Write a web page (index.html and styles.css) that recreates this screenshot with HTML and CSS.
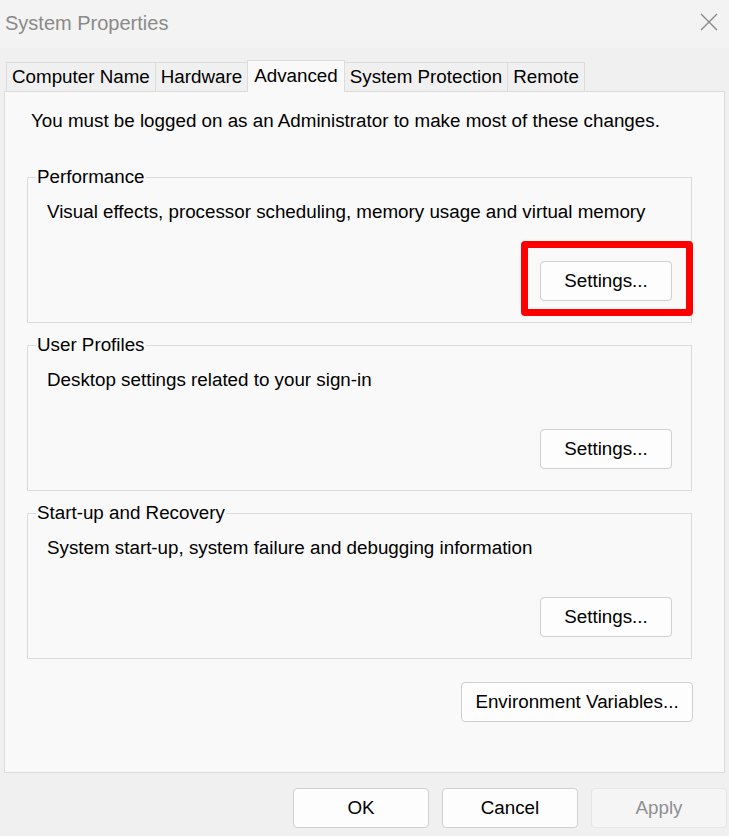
FILE: index.html
```html
<!DOCTYPE html>
<html lang="en">
<head>
  <meta charset="UTF-8" />
  <title>System Properties</title>
  <link rel="stylesheet" href="styles.css">
</head>
<body>
  <div class="window">
    <div class="titlebar">
      <span class="title">System Properties</span>
      <svg class="close" width="18" height="18" viewBox="0 0 18 18">
        <path d="M1 1 L17 17 M17 1 L1 17" stroke="#8a8a8a" stroke-width="1.4" fill="none" />
      </svg>
    </div>

    <div class="tabs">
      <div class="tab">Computer Name</div>
      <div class="tab">Hardware</div>
      <div class="tab active">Advanced</div>
      <div class="tab">System Protection</div>
      <div class="tab">Remote</div>
    </div>

    <div class="panel">
      <p class="notice">You must be logged on as an Administrator to make most of these changes.</p>

      <fieldset class="group">
        <legend>Performance</legend>
        <p>Visual effects, processor scheduling, memory usage and virtual memory</p>
        <div class="group-actions">
          <span class="highlight">
            <button class="btn">Settings...</button>
          </span>
        </div>
      </fieldset>

      <fieldset class="group">
        <legend>User Profiles</legend>
        <p>Desktop settings related to your sign-in</p>
        <div class="group-actions">
          <button class="btn">Settings...</button>
        </div>
      </fieldset>

      <fieldset class="group">
        <legend>Start-up and Recovery</legend>
        <p>System start-up, system failure and debugging information</p>
        <div class="group-actions">
          <button class="btn">Settings...</button>
        </div>
      </fieldset>

      <div class="env-row">
        <button class="btn btn-wide">Environment Variables...</button>
      </div>
    </div>

    <div class="footer">
      <button class="btn">OK</button>
      <button class="btn">Cancel</button>
      <button class="btn" disabled>Apply</button>
    </div>
  </div>
</body>
</html>
```

FILE: styles.css
```css
body {
  margin: 0;
  background: #f0f0f0;
  font-family: "Liberation Sans", Arial, sans-serif;
  font-size: 18.8px;
  color: #000;
}

.window {
  width: 729px;
  height: 836px;
  overflow: hidden;
}

/* Title bar */
.titlebar {
  height: 48px;
  background: #f3f3f3;
  display: flex;
  align-items: center;
  justify-content: space-between;
  padding: 0 11px 0 5px;
}

.title {
  color: #8a8a8a;
  font-size: 20px;
  margin-top: -2px;
}

.close {
  margin-top: -4px;
}

/* Tabs */
.tabs {
  display: flex;
  align-items: flex-end;
  padding: 12px 0 0 6px;
  position: relative;
  z-index: 1;
}

.tab {
  height: 28px;
  line-height: 28px;
  padding: 0 5px;
  border: 1px solid #dcdcdc;
  border-bottom: none;
  border-right: none;
  background: #f0f0f0;
  white-space: nowrap;
}

.tab:nth-child(5) {
  border-right: 1px solid #dcdcdc;
}

.tab.active {
  height: 31px;
  line-height: 29px;
  background: #f9f9f9;
  margin-bottom: -1px;
  border-right: 1px solid #dcdcdc;
  padding: 0 6px;
}

.tab.active + .tab {
  border-left: none;
}

/* Main panel */
.panel {
  margin: 0 4px 0 4px;
  height: 680px;
  background: #f9f9f9;
  border: 1px solid #dcdcdc;
  padding: 0 32px 0 22px;
  box-sizing: content-box;
}

.notice {
  margin: 17px 0 0 4px;
  line-height: 24px;
}

.group {
  border: 1px solid #dcdcdc;
  margin: 32px 0 0 0;
  padding: 0 19px 21px 19px;
  min-width: 0;
}

.group + .group {
  margin-top: 10px;
}

.group legend {
  padding: 0 1px;
  margin-left: -11px;
  line-height: 24px;
}

.group p {
  margin: 11px 0 0 0;
  line-height: 24px;
}

.group-actions {
  display: flex;
  justify-content: flex-end;
  margin-top: 37px;
}

.highlight {
  position: relative;
  display: inline-flex;
}

.highlight::after {
  content: "";
  position: absolute;
  top: -20px;
  bottom: -15px;
  left: -19px;
  right: -21px;
  border: 7px solid #ff0000;
  border-radius: 4px;
}

/* Buttons */
.btn {
  font-family: "Liberation Sans", Arial, sans-serif;
  font-size: 18.8px;
  color: #000;
  width: 132px;
  height: 40px;
  background: #fdfdfd;
  border: 1px solid #d0d0d0;
  border-radius: 4px;
  padding: 0;
}

.btn-wide {
  width: 232px;
}

.btn:disabled {
  background: #f5f5f5;
  border-color: #e6e6e6;
  color: #8f8f8f;
}

.env-row {
  display: flex;
  justify-content: flex-end;
  margin: 23px -1px 0 0;
}

.footer {
  display: flex;
  justify-content: flex-end;
  gap: 13px;
  padding: 15px 2px 0 0;
}

.footer .btn {
  width: 136px;
}
```
